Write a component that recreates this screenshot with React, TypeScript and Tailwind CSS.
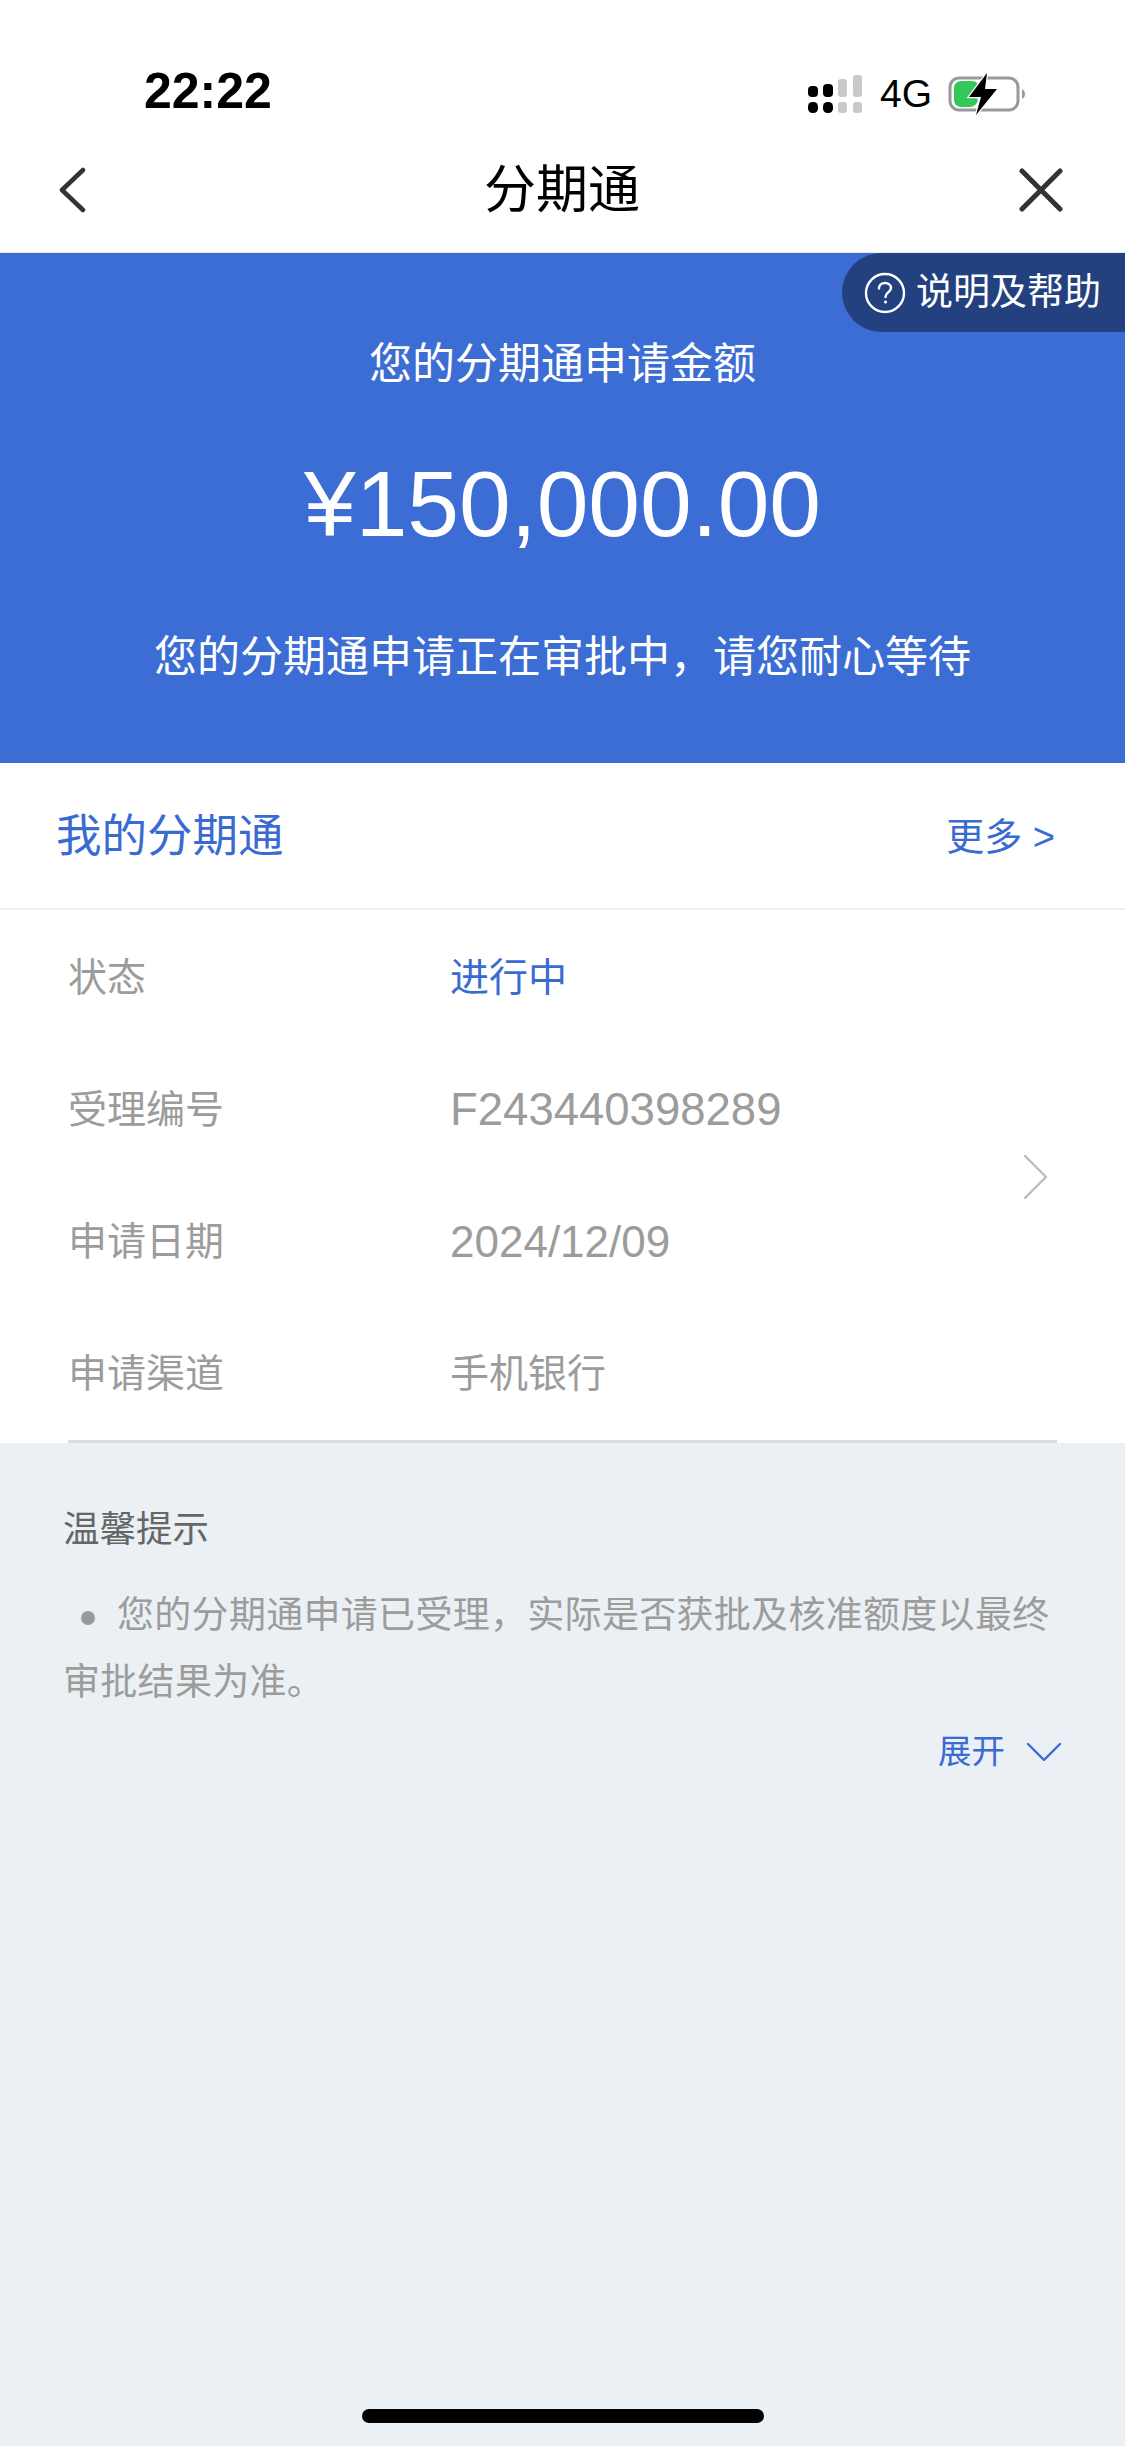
const cjk = 'font-["Liberation_Sans","Noto_Sans_CJK_SC",sans-serif]';

function StatusIcons() {
    return (
        <div className="flex items-center">
            <svg width="58" height="40" viewBox="0 0 58 40" className="block">
                <rect x="0" y="12" width="10" height="11" rx="4" fill="#000" />
                <rect x="15" y="10" width="10" height="13" rx="4" fill="#000" />
                <rect x="0" y="28" width="10" height="11" rx="4.5" fill="#000" />
                <rect x="15" y="28" width="10" height="11" rx="4.5" fill="#000" />
                <rect x="30" y="5" width="9" height="18" rx="3" fill="#c9c9c9" />
                <rect x="45" y="1" width="9" height="22" rx="3" fill="#c9c9c9" />
                <rect x="30" y="28" width="9" height="11" rx="3" fill="#c9c9c9" />
                <rect x="45" y="28" width="9" height="11" rx="3" fill="#c9c9c9" />
            </svg>
            <span className="ml-[14px] text-[39px] leading-[40px] text-black">4G</span>
            <svg width="78" height="42" viewBox="0 0 78 42" className="ml-[16px] block">
                <rect x="2" y="5" width="68" height="32" rx="9" fill="none" stroke="#999" strokeWidth="3" />
                <path d="M74 16c2 1 3 3 3 5s-1 4-3 5z" fill="#999" />
                <path d="M6 15c0-4 3-7 7-7h11c4 0 7 3 7 6l-6 7 5 6c-1 4-4 7-8 7H13c-4 0-7-3-7-7z" fill="#34c759" />
                <path d="M39 0 21 24h12l-5 18 21-26H37z" fill="#000" stroke="#fff" strokeWidth="2.5" paintOrder="stroke" />
            </svg>
        </div>
    );
}

function InfoRow({ label, value, valueClass }: { label: string; value: string; valueClass: string }) {
    return (
        <div className="flex h-[132px] items-center">
            <div className="w-[382px] text-[39px] text-[#9c9c9c]">{label}</div>
            <div className={valueClass}>{value}</div>
        </div>
    );
}

export default function App() {
    return (
        <div className={`flex h-[2446px] w-[1125px] flex-col overflow-hidden bg-[#ebf0f5] ${cjk}`}>
            {/* Status bar */}
            <div className="flex h-[147px] shrink-0 items-end justify-between bg-white pb-[32px] pl-[144px] pr-[99px]">
                <span className="text-[50px] font-bold leading-[48px] text-black">22:22</span>
                <StatusIcons />
            </div>

            {/* Nav */}
            <div className="flex h-[106px] shrink-0 items-center justify-between border-b border-[#e8e8e8] bg-white pb-[20px] pl-[58px] pr-[62px]">
                <div className="w-[60px]">
                    <svg width="28" height="46" viewBox="0 0 28 46" className="block">
                        <path d="M25 3 4 23l21 20" fill="none" stroke="#333" strokeWidth="4.5" strokeLinecap="round" strokeLinejoin="round" />
                    </svg>
                </div>
                <span className="text-[52px] text-black">分期通</span>
                <div className="flex w-[57px] justify-end">
                    <svg width="44" height="44" viewBox="0 0 44 44" className="block">
                        <path d="M3 3l38 38M41 3 3 41" fill="none" stroke="#333" strokeWidth="5" strokeLinecap="round" />
                    </svg>
                </div>
            </div>

            {/* Banner */}
            <div className="relative flex h-[510px] shrink-0 flex-col items-center bg-[#3c6dd4] text-white">
                <div className="absolute right-0 top-0 flex h-[79px] w-[283px] items-center rounded-l-[40px] bg-[#23417f] pl-[22px]">
                    <svg width="42" height="42" viewBox="0 0 42 42" className="block">
                        <circle cx="21" cy="21" r="19" fill="none" stroke="#fff" strokeWidth="2.4" />
                        <path d="M15 16.5c0-3.4 2.7-5.5 6-5.5s6 2 6 5c0 4-5.5 4.5-5.5 9" fill="none" stroke="#fff" strokeWidth="2.4" strokeLinecap="round" />
                        <circle cx="21.5" cy="30" r="1.6" fill="#fff" />
                    </svg>
                    <span className="ml-[10px] whitespace-nowrap text-[37px] leading-none">说明及帮助</span>
                </div>
                <div className="mt-[85px] text-[43px] leading-[52px]">您的分期通申请金额</div>
                <div className="mt-[64px] text-[93px] leading-[100px]">¥150,000.00</div>
                <div className="mt-[77px] text-[43px] leading-[52px]">您的分期通申请正在审批中，请您耐心等待</div>
            </div>

            {/* My installments */}
            <div className="flex h-[147px] shrink-0 items-center justify-between border-b-2 border-[#eeeeee] bg-white pl-[56px] pr-[70px] pt-[3px]">
                <span className="text-[45.5px] text-[#3a6bd3]">我的分期通</span>
                <span className="text-[38px] text-[#3a6bd3]">更多 &gt;</span>
            </div>

            <div className="shrink-0 bg-white px-[68px]">
                <div className="flex items-center justify-between border-b-[3px] border-[#dddddd]">
                    <div className="pt-[2px]">
                        <InfoRow label="状态" value="进行中" valueClass="text-[39px] text-[#3a6bd3]" />
                        <InfoRow label="受理编号" value="F243440398289" valueClass="text-[45.5px] text-[#9c9c9c]" />
                        <InfoRow label="申请日期" value="2024/12/09" valueClass="text-[44px] text-[#9c9c9c]" />
                        <InfoRow label="申请渠道" value="手机银行" valueClass="text-[39px] text-[#9c9c9c]" />
                    </div>
                    <svg width="26" height="46" viewBox="0 0 26 46" className="mb-[-4px] mr-[8px] block">
                        <path d="M2 2l21 21L2 44" fill="none" stroke="#bcbcbc" strokeWidth="2.4" strokeLinecap="round" strokeLinejoin="round" />
                    </svg>
                </div>
            </div>

            {/* Tips */}
            <div className="px-[63px] pt-[63px]">
                <div className="text-[36.5px] leading-[48px] text-[#666666]">温馨提示</div>
                <div className="mt-[28px] text-[37px] leading-[67px] tracking-[0.3px] text-[#9c9c9c]">
                    <span className="ml-[18px] mr-[22px] inline-block h-[14px] w-[14px] rounded-full bg-[#999999] align-middle" />
                    您的分期通申请已受理，实际是否获批及核准额度以最终审批结果为准。
                </div>
                <div className="mt-[11px] flex items-center justify-end">
                    <span className="text-[33.5px] text-[#3a6bd3]">展开</span>
                    <svg width="36" height="20" viewBox="0 0 36 20" className="ml-[21px] block">
                        <path d="M2 2l16 16L34 2" fill="none" stroke="#3a6bd3" strokeWidth="2.4" strokeLinecap="round" strokeLinejoin="round" />
                    </svg>
                </div>
            </div>

            {/* Home indicator */}
            <div className="mt-auto flex justify-center pb-[23px]">
                <div className="h-[14px] w-[402px] rounded-full bg-black" />
            </div>
        </div>
    );
}
